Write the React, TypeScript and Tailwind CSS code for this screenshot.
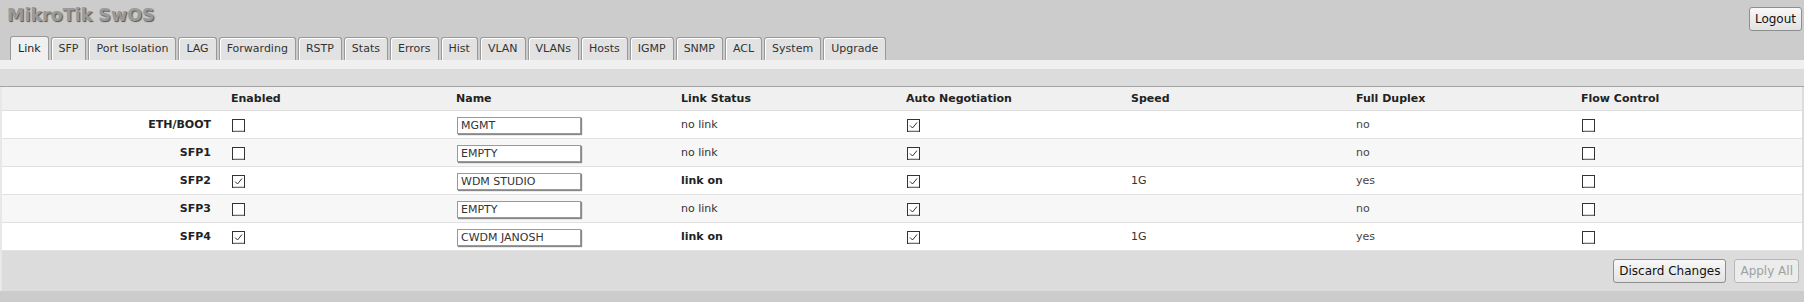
import { useState } from "react";

const tabs = [
  "Link",
  "SFP",
  "Port Isolation",
  "LAG",
  "Forwarding",
  "RSTP",
  "Stats",
  "Errors",
  "Hist",
  "VLAN",
  "VLANs",
  "Hosts",
  "IGMP",
  "SNMP",
  "ACL",
  "System",
  "Upgrade",
];

const columns = [
  "Enabled",
  "Name",
  "Link Status",
  "Auto Negotiation",
  "Speed",
  "Full Duplex",
  "Flow Control",
];

const ports = [
  { port: "ETH/BOOT", enabled: false, name: "MGMT", link: false, auto: true, speed: "", duplex: "no", flow: false },
  { port: "SFP1", enabled: false, name: "EMPTY", link: false, auto: true, speed: "", duplex: "no", flow: false },
  { port: "SFP2", enabled: true, name: "WDM STUDIO", link: true, auto: true, speed: "1G", duplex: "yes", flow: false },
  { port: "SFP3", enabled: false, name: "EMPTY", link: false, auto: true, speed: "", duplex: "no", flow: false },
  { port: "SFP4", enabled: true, name: "CWDM JANOSH", link: true, auto: true, speed: "1G", duplex: "yes", flow: false },
];

function Check({ checked }: { checked: boolean }) {
  return (
    <svg width="13" height="13" viewBox="0 0 13 13" className="block">
      <rect x="0.5" y="0.5" width="12" height="12" fill="#fff" stroke="#333" />
      <line x1="1.5" y1="12" x2="12" y2="12" stroke="#aaa" />
      {checked && (
        <polyline points="3,6.5 5.5,9 10,3.5" fill="none" stroke="#333" strokeWidth="1" />
      )}
    </svg>
  );
}

function Button({ label, disabled }: { label: string; disabled?: boolean }) {
  return (
    <button
      className={
        disabled
          ? "h-[24px] rounded-[3px] border border-[#b8b8b8] bg-[#ececec] px-[5px] text-[12px] text-[#a0a0a0]"
          : "h-[24px] rounded-[3px] border border-[#8f8f8f] bg-gradient-to-b from-[#f8f8f8] to-[#e2e2e2] px-[5px] text-[12px] text-[#111]"
      }
    >
      {label}
    </button>
  );
}

export default function App() {
  const [active, setActive] = useState("Link");

  return (
    <div className="w-[1804px] bg-[#dcdcdc] font-['DejaVu_Sans',Verdana,sans-serif] text-[11px] text-[#333]">
      <div className="bg-[#cccccc]">
        <div className="flex h-[36px] items-start justify-between">
          <h1 className="pl-[7px] pt-[3px] text-[17.5px] font-bold leading-[24px] text-[#9a9a9a] [text-shadow:1px_1px_1px_#555]">
            MikroTik SwOS
          </h1>
          <div className="mr-[2px] mt-[7px]">
            <Button label="Logout" />
          </div>
        </div>
        <div className="flex h-[24px] items-end gap-[2px] pl-[10px]">
          {tabs.map((tab) => (
            <button
              key={tab}
              onClick={() => setActive(tab)}
              className={
                tab === active
                  ? "h-[24px] rounded-t-[3px] border border-b-0 border-[#999] bg-[#f0f0f0] px-[7px] pt-[2px] text-[11px] text-[#222]"
                  : "h-[23px] rounded-t-[3px] border border-b-0 border-[#999] bg-[#e2e2e2] px-[7px] pt-[1px] text-[11px] text-[#333] shadow-[inset_1px_1px_0_#fff]"
              }
            >
              {tab}
            </button>
          ))}
        </div>
      </div>

      <div className="h-[9px] bg-[#f0f0f0]" />
      <div className="h-[18px] border-b border-[#a4a4a4] bg-[#dcdcdc]" />

      <div className="border-l-2 border-[#e8e8e8] pr-[2px]">
        <div className="grid h-[24px] grid-cols-8 items-center border-b border-[#dedede] bg-[#f0f0f0] pt-[1px] font-bold text-[#222]">
          <div />
          {columns.map((col) => (
            <div key={col} className="pl-[4px]">
              {col}
            </div>
          ))}
        </div>

        {ports.map((p, i) => (
          <div
            key={p.port}
            className={
              "grid h-[28px] grid-cols-8 items-center border-b border-[#e2e2e2] pt-[1px] " +
              (i % 2 === 1 ? "bg-[#f7f7f7]" : "bg-white")
            }
          >
            <div className="pr-[16px] text-right font-bold text-[#222]">{p.port}</div>
            <div className="pl-[5px]">
              <Check checked={p.enabled} />
            </div>
            <div className="pl-[5px]">
              <input
                defaultValue={p.name}
                className="block h-[17px] w-[124px] border border-[#999] bg-white px-[3px] text-[11px] text-[#333] shadow-[1px_1px_1px_#888] outline-none"
              />
            </div>
            <div className={"pl-[4px] " + (p.link ? "font-bold text-[#222]" : "")}>
              {p.link ? "link on" : "no link"}
            </div>
            <div className="pl-[5px]">
              <Check checked={p.auto} />
            </div>
            <div className="pl-[4px]">{p.speed}</div>
            <div className="pl-[4px] text-[#444]">{p.duplex}</div>
            <div className="pl-[5px]">
              <Check checked={p.flow} />
            </div>
          </div>
        ))}

        <div className="flex h-[40px] items-center justify-end gap-[8px] pr-[3px]">
          <Button label="Discard Changes" />
          <Button label="Apply All" disabled />
        </div>
      </div>

      <div className="h-[11px] bg-[#cccccc]" />
    </div>
  );
}
